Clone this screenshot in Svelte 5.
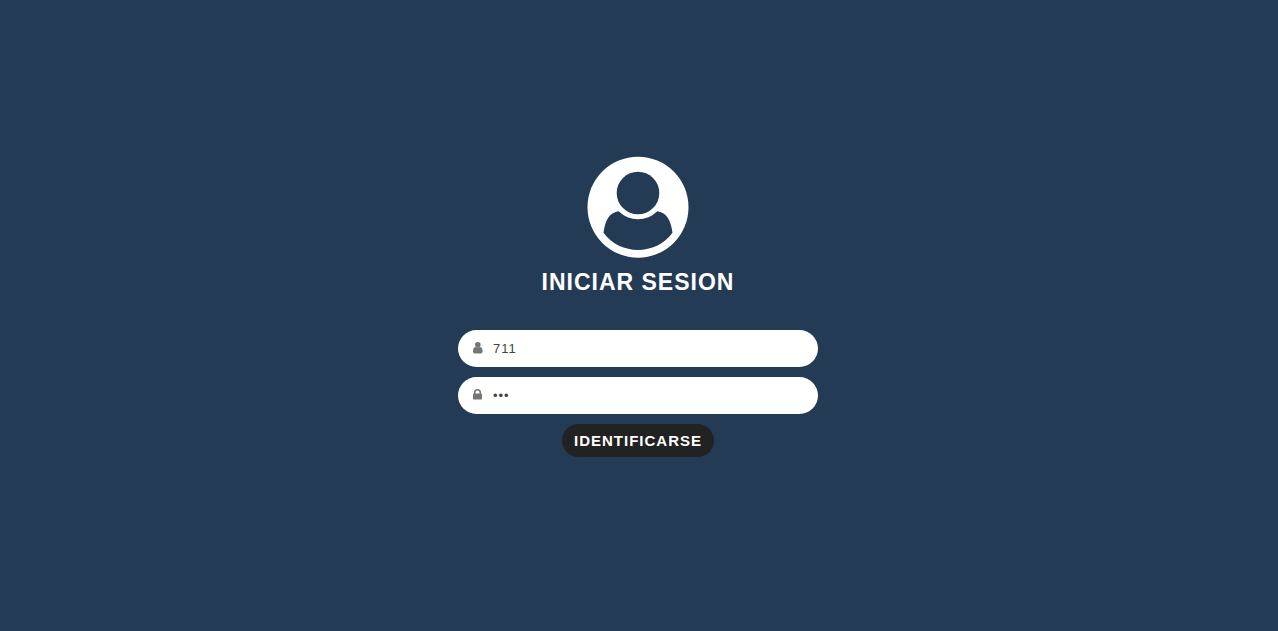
<script>
  let user = $state('711');
  let password = $state('711');
</script>

<main class="page">
  <form class="login" onsubmit={(event) => event.preventDefault()}>
    <svg class="avatar" viewBox="0 0 102 102" aria-hidden="true">
      <circle cx="51" cy="51.2" r="50.5" fill="#fff" />
      <circle cx="51" cy="37" r="21.3" fill="#243b55" />
      <path d="M31.7 55.2C23 56 18 64 16.5 76.7C33 99.6 69 99.6 85.5 76.7C84 64 79 56 70.3 55.2A27.2 27.2 0 0 1 31.7 55.2Z" fill="#243b55" />
    </svg>
    <h1>INICIAR SESION</h1>
    <label class="field">
      <svg viewBox="0 0 10 12" aria-hidden="true">
        <circle cx="4.8" cy="2.8" r="2.8" />
        <path d="M2.4 5C.7 5.1 0 7 0 9.3C0 10.6.7 11.5 1.7 11.5H7.9C8.9 11.5 9.6 10.6 9.6 9.3C9.6 7 8.9 5.1 7.2 5C6.3 5.4 3.3 5.4 2.4 5Z" />
      </svg>
      <input type="text" aria-label="Usuario" autocomplete="off" bind:value={user} />
    </label>
    <label class="field">
      <svg viewBox="0 0 10 12" aria-hidden="true">
        <path fill-rule="evenodd" d="M2.5 4.5H6.5V3.5a2 2 0 0 0-4 0V4.5ZM9 5.3V9.7a.8.8 0 0 1-.8.8H.8A.8.8 0 0 1 0 9.7V5.3A.8.8 0 0 1 .8 4.5H1V3.5a3.5 3.5 0 0 1 7 0V4.5H8.2A.8.8 0 0 1 9 5.3Z" />
      </svg>
      <input type="password" aria-label="Clave" autocomplete="off" bind:value={password} />
    </label>
    <button type="submit">IDENTIFICARSE</button>
  </form>
</main>

<style>
  :global(body) {
    margin: 0;
    background: #243b55;
  }

  .page {
    display: flex;
    justify-content: center;
    align-items: center;
    box-sizing: border-box;
    min-height: 100vh;
    padding: 0 18px 19px 16px;
    font-family: "Liberation Sans", Arial, sans-serif;
    letter-spacing: 1px;
  }

  .login {
    display: flex;
    flex-direction: column;
    align-items: center;
    gap: 10px;
    width: 100%;
    max-width: 360px;
  }

  .avatar {
    width: 102px;
    height: 102px;
  }

  h1 {
    margin: 0 0 24px;
    color: #fff;
    font-size: 23px;
    line-height: 28px;
    font-weight: 700;
  }

  .field {
    display: flex;
    align-items: center;
    gap: 10px;
    box-sizing: border-box;
    width: 100%;
    height: 37px;
    padding: 0 15px;
    border-radius: 20px;
    background: #fff;
  }

  .field svg {
    width: 10px;
    height: 12px;
    fill: #757575;
  }

  input {
    flex: 1;
    min-width: 0;
    padding: 0;
    border: 0;
    outline: none;
    background: transparent;
    color: #444;
    font: inherit;
    font-size: 13px;
    letter-spacing: inherit;
  }

  button {
    height: 33px;
    padding: 0 12px;
    border: 0;
    border-radius: 20px;
    background: #222;
    color: #fff;
    font: inherit;
    font-size: 15px;
    font-weight: 700;
    letter-spacing: inherit;
    cursor: pointer;
  }
</style>
